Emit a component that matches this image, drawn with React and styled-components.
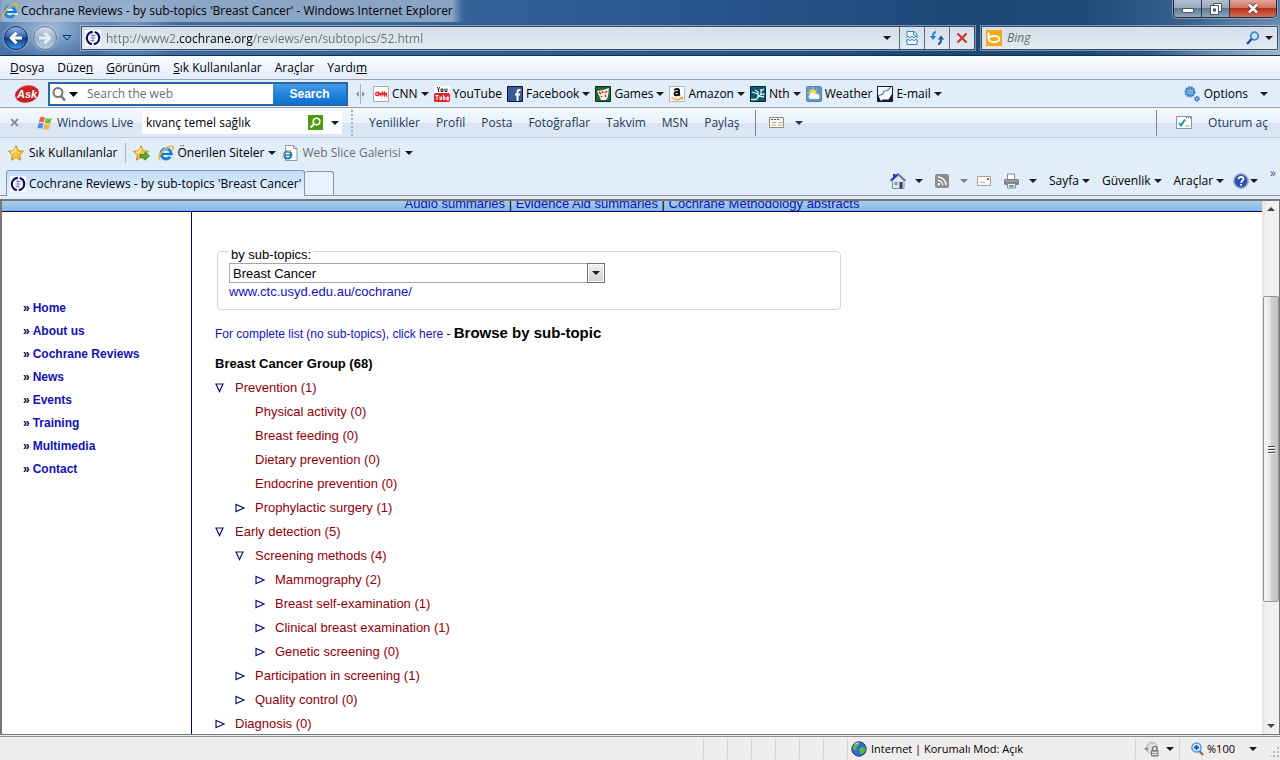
import React from 'react'
import styled, { createGlobalStyle } from 'styled-components'

const GlobalStyle = createGlobalStyle`
  * {
    box-sizing: border-box;
  }

  body {
    margin: 0;
    font-family: "Open Sans", "Noto Sans", sans-serif;
    font-size: 12px;
    line-height: 16px;
    color: #000;
  }

  button {
    padding: 0;
    border: 0;
    background: none;
    color: inherit;
    font: inherit;
  }

  svg {
    display: block;
    flex: none;
  }
`

const Window = styled.div`
  display: flex;
  flex-direction: column;
  height: 100vh;
  overflow: hidden;
  background: #e1edf9;
`

const Caret = styled.span`
  flex: none;
  width: 8px;
  height: 4px;
  border: 4px solid transparent;
  border-top-color: ${props => props.color || '#1a1a1a'};
  border-bottom: 0;
`

const Spacer = styled.div`
  flex: 1;
`

/* title bar and address row */

const Chrome = styled.header`
  border-bottom: 1px solid #16314f;
  background:
    radial-gradient(ellipse 60px 34px at 50px 28px, rgba(200, 218, 240, 0.7), transparent),
    radial-gradient(ellipse 50px 40px at 130px 30px, rgba(170, 198, 232, 0.5), transparent),
    radial-gradient(ellipse 130px 50px at 100% 60px, rgba(200, 214, 230, 0.7), transparent),
    linear-gradient(90deg, #4471a6 0, #35649b 30%, #2b5990 50%, #1d4776 75%, #1f4a7a 85%, #56799f 100%);
`

const TitleBar = styled.div`
  display: flex;
  justify-content: space-between;
  height: 22px;
  padding: 0 2px;
`

const Title = styled.h1`
  display: flex;
  align-items: center;
  gap: 3px;
  height: 22px;
  margin: 0;
  background: rgba(190, 204, 220, 0.62);
  box-shadow: 0 0 8px 5px rgba(190, 204, 220, 0.62);
  clip-path: inset(0 -14px 0 -2px);
  font-size: 12px;
  font-weight: 400;
`

const WindowButtons = styled.div`
  display: flex;
  height: 18px;
  margin-right: 1px;
  border: 1px solid #1d2b3d;
  border-top: 0;
  border-radius: 0 0 5px 5px;
  box-shadow: 0 0 0 1px rgba(200, 216, 234, 0.5);
  overflow: hidden;
`

const WindowButton = styled.button`
  display: flex;
  align-items: center;
  justify-content: center;
  width: ${props => (props.$close ? 46 : 28)}px;
  border-right: ${props => (props.$close ? 0 : 1)}px solid #26374b;
  background: ${props =>
    props.$close
      ? 'linear-gradient(#e0a598 0, #cf7563 45%, #b92f17 50%, #d0705a 100%)'
      : 'linear-gradient(#b3c0cf 0, #97a8bc 45%, #62788f 50%, #93a5b9 100%)'};
`

const AddressRow = styled.div`
  display: flex;
  align-items: center;
  height: 33px;
  padding: 0 2px 1px 4px;
`

const RoundButton = styled.button`
  display: flex;
  align-items: center;
  justify-content: center;
  width: 24px;
  height: 24px;
  margin-right: 5px;
  border: 1px solid ${props => (props.$off ? '#60799a' : '#0d2a58')};
  border-radius: 50%;
  box-shadow: 0 0 2px #dbe8f6;
  background: ${props =>
    props.$off
      ? 'linear-gradient(#d3deea, #9fb2ca 50%, #bccbdd)'
      : 'linear-gradient(#8fb0dc 0, #3464ad 45%, #0c3580 50%, #3d9be6 100%)'};
`

const HistoryButton = styled.button`
  display: flex;
  align-items: center;
  height: 20px;
  margin: 0 9px 0 0;
`

const Field = styled.div`
  display: flex;
  align-items: center;
  height: 24px;
  border: 1px solid #3b5169;
  outline: 1px solid rgba(200, 216, 234, 0.5);
  background: linear-gradient(#d6dfe9, #e2eaf4);
`

const AddressField = styled(Field)`
  flex: 1;
  margin-right: 6px;
  padding-left: 3px;
`

const BingField = styled(Field)`
  width: 297px;
  padding: 0 4px 0 4px;
`

const AddressInput = styled.input`
  flex: 1;
  min-width: 0;
  height: 20px;
  margin-left: 2px;
  padding: 0 3px;
  border: 0;
  outline: 0;
  background: linear-gradient(90deg, #6c7075 73px, #000 73px, #000 150px, #6c7075 150px);
  background-clip: text;
  -webkit-text-fill-color: transparent;
  font: inherit;
`

const BingInput = styled.input`
  flex: 1;
  min-width: 0;
  padding: 0 5px;
  border: 0;
  outline: 0;
  background: none;
  font: inherit;

  &::placeholder {
    color: #666a70;
    font-style: italic;
    opacity: 1;
  }
`

const FieldButton = styled.button`
  display: flex;
  align-items: center;
  justify-content: center;
  width: 25px;
  height: 22px;
  border-left: ${props => (props.$plain ? 0 : 1)}px solid #5a6b80;
`

/* toolbars */

const MenuBar = styled.nav`
  display: flex;
  align-items: center;
  gap: 13px;
  height: 24px;
  padding-left: 10px;
  border-bottom: 1px solid #a0a0a0;
  background: linear-gradient(#fafcff 0, #eff4fe 50%, #e3ebf9 100%);
`

const AskBar = styled.div`
  display: flex;
  align-items: center;
  height: 28px;
  padding-left: 14px;
  border-bottom: 1px solid #a0a0a0;
  background: #e1edf9;
`

const AskSearch = styled.form`
  display: flex;
  align-items: center;
  height: 24px;
  width: 300px;
  margin: 0 8px 0 8px;
  border: 2px solid #2668ab;
  background: #fff;
`

const AskInput = styled.input`
  flex: 1;
  min-width: 0;
  padding: 0 0 0 9px;
  border: 0;
  outline: 0;
  background: none;
  font: inherit;

  &::placeholder {
    color: #6e6e6e;
    opacity: 1;
  }
`

const AskButton = styled.button`
  align-self: stretch;
  width: 73px;
  background: linear-gradient(#4a9ae6 0, #2383dc 50%, #0f70cf 100%);
  color: #fff;
  font-family: "Liberation Sans", Arial, sans-serif;
  font-weight: 700;
  font-size: 12px;
`

const AskItem = styled.button`
  display: flex;
  align-items: center;
  gap: 3px;
  margin-left: ${props => (props.$first ? 8 : 5)}px;
`

const OptionsButton = styled.button`
  display: flex;
  align-items: center;
  gap: 4px;
  margin-right: 12px;

  ${Caret} {
    margin-left: 8px;
  }
`

const LiveBar = styled.div`
  display: flex;
  align-items: center;
  height: 30px;
  padding-left: 10px;
  border-bottom: 1px solid #c4cedb;
  background: linear-gradient(#f3f8fe 0, #eaf2fc 50%, #dae5f3 52%, #dde8f6 100%);
  color: #1e395b;
`

const LiveBrand = styled.span`
  display: flex;
  align-items: center;
  gap: 4px;
  width: 105px;
  margin-left: 18px;
`

const LiveSearch = styled.form`
  display: flex;
  align-items: center;
  width: 200px;
  height: 23px;
  padding: 0 3px 0 4px;
  background: #fff;
`

const LiveInput = styled.input`
  flex: 1;
  min-width: 0;
  padding: 0;
  border: 0;
  outline: 0;
  color: #000;
  font: inherit;
`

const LiveGo = styled.button`
  margin-right: 8px;
`

const DottedLine = styled.div`
  width: 2px;
  height: 26px;
  margin: 0 16px 0 9px;
  background: repeating-linear-gradient(#a5aebb 0 2px, transparent 2px 4px);
`

const LiveLinks = styled.nav`
  display: flex;
  gap: 16px;
`

const BarLink = styled.a`
  color: inherit;
  text-decoration: none;
  white-space: nowrap;
`

const Divider = styled.div`
  flex: none;
  width: 1px;
  height: ${props => props.$h || 26}px;
  margin: ${props => props.$m || '0'};
  background: ${props => props.color || '#7c8796'};
`

const FavoritesBar = styled.div`
  display: flex;
  align-items: center;
  height: 30px;
  padding-left: 8px;
`

const FavoriteButton = styled.button`
  display: flex;
  align-items: center;
  gap: 4px;
  margin-right: ${props => props.$after || 8}px;
  color: ${props => (props.$muted ? '#6d6d6d' : '#000')};
`

const TabRow = styled.div`
  display: flex;
  align-items: flex-end;
  height: 28px;
  padding-left: 6px;
  border-bottom: 1px solid #8c95a5;
`

const Tab = styled.button`
  display: flex;
  align-items: center;
  gap: 3px;
  width: 299px;
  height: 26px;
  margin-bottom: -1px;
  padding-left: 3px;
  border: 1px solid #8c95a5;
  border-bottom: 0;
  border-radius: 3px 3px 0 0;
  background: linear-gradient(#bfdcfa, #eaf3fd);
  white-space: nowrap;
`

const NewTab = styled.button`
  width: 29px;
  height: 24px;
  border: 1px solid #8c95a5;
  border-left: 0;
  border-bottom: 0;
  border-radius: 3px 3px 0 0;
  background: #e9f1fb;
`

const Commands = styled.div`
  display: flex;
  align-items: center;
  height: 28px;
  margin-left: auto;
  padding-right: 4px;
`

const Command = styled.button`
  display: flex;
  align-items: center;
  gap: ${props => props.$gap || 3}px;
  margin-right: ${props => props.$after || 12}px;
`

const More = styled.button`
  align-self: flex-start;
  color: #4b5b9c;
  line-height: 12px;
`

/* page area */

const Viewport = styled.div`
  display: flex;
  flex: 1;
  min-height: 0;
  margin-top: 3px;
  border: solid #787878;
  border-width: 2px 1px 1px 2px;
  background: #fff;
  font-family: "Liberation Sans", Arial, sans-serif;
  font-size: 13px;
`

const Page = styled.div`
  display: flex;
  flex: 1;
  flex-direction: column;
  min-width: 0;
  overflow: hidden;
`

const PageStrip = styled.div`
  display: flex;
  flex: none;
  align-items: flex-end;
  justify-content: center;
  height: 11px;
  border-bottom: 1px solid #00007c;
  background: linear-gradient(#a5cdec, #86b8e0);
  line-height: 14px;
  overflow: hidden;
  white-space: pre;
`

const PageLink = styled.a`
  color: #1111b5;
  text-decoration: none;
`

const Columns = styled.div`
  display: flex;
  flex: 1;
  min-height: 0;
`

const Sidebar = styled.nav`
  width: 190px;
  padding: 85px 0 0 21px;
  border-right: 1px solid #00006c;
  color: #000050;
  font-size: 12px;
  font-weight: 700;
  line-height: 23px;
`

const SideItem = styled.div`
  ${PageLink} {
    margin-left: 3px;
  }
`

const Content = styled.main`
  flex: 1;
  min-width: 0;
  padding: 28px 23px 0;
`

const TopicBox = styled.fieldset`
  max-width: 624px;
  height: 70px;
  margin: 0 0 0 2px;
  padding: 0 11px;
  border: 1px solid #ccd7e0;
  border-radius: 4px;
  line-height: 17px;
`

const TopicLegend = styled.legend`
  margin: 0;
  padding: 6px 2px 0;
`

const SelectBox = styled.div`
  display: grid;
  width: 376px;
  height: 20px;
`

const TopicSelect = styled.select`
  grid-area: 1 / 1;
  padding: 1px 3px 0;
  border: 1px solid #a5a5aa;
  border-radius: 0;
  appearance: none;
  background: #fff;
  font: inherit;
`

const SelectArrow = styled.span`
  grid-area: 1 / 1;
  display: flex;
  align-items: center;
  justify-content: center;
  justify-self: end;
  width: 18px;
  border: 1px solid #707070;
  box-shadow: inset 0 0 0 1px #fff;
  background: linear-gradient(#f2f2f2, #d0d0d0);
  pointer-events: none;
`

const Lead = styled.p`
  margin: 11px 0 0;
  font-size: 12px;
  line-height: 24px;

  strong {
    font-size: 15px;
  }
`

const GroupTitle = styled.h2`
  margin: 6px 0 0;
  font-size: 13px;
  line-height: 24px;
`

const TreeList = styled.ul`
  margin: 0;
  padding-left: ${props => (props.$nested ? 20 : 0)}px;
  list-style: none;
  line-height: 24px;
`

const TreeRow = styled.div`
  display: grid;
  grid-template-columns: 20px 1fr;
  align-items: center;
`

const TreeLink = styled(PageLink)`
  color: #8f0008;
`

const ScrollTrack = styled.div`
  display: flex;
  flex-direction: column;
  width: 17px;
  border-left: 1px solid #e3e3e3;
  background: linear-gradient(90deg, #e8e8e8, #f0f0f0 30%, #f2f2f2);
`

const ScrollButton = styled.button`
  display: flex;
  align-items: center;
  justify-content: center;
  height: 17px;
  transform: ${props => (props.$up ? 'rotate(180deg)' : 'none')};
`

const ScrollSpace = styled.div`
  flex: ${props => props.$part};
`

const ScrollThumb = styled.div`
  display: flex;
  flex: 306;
  flex-direction: column;
  align-items: center;
  justify-content: center;
  gap: 2px;
  border: 1px solid #959595;
  border-radius: 2px;
  background: linear-gradient(90deg, #f5f5f5, #e6e6e8 45%, #cfcfd2 50%, #c4c4c8);
`

const Grip = styled.span`
  width: 7px;
  height: 1px;
  background: #444;
  box-shadow: 0 1px #fff;
`

const StatusBar = styled.footer`
  display: flex;
  align-items: center;
  flex: none;
  height: 24px;
  margin-top: 1px;
  border-top: 1px solid #8e8e8e;
  background: #f0eded;
  font-size: 11px;
`

const StatusCell = styled.div`
  display: flex;
  align-items: center;
  gap: ${props => props.$gap || 4}px;
  width: ${props => props.$w}px;
  height: 20px;
  padding-left: ${props => props.$pad || 0}px;
  padding-right: ${props => props.$end || 0}px;
  border-left: 1px solid #d5d2d2;
`

/* icons */

const IeIcon = () => (
  <svg width="16" height="16" viewBox="0 0 16 16">
    <circle cx="8" cy="8.800" r="5" fill="#e9f4fd" stroke="#1f86d6" strokeWidth="3.200" />
    <path d="M4 9h10.500" stroke="#1b74c4" strokeWidth="2.200" />
    <path d="M10.500 10.200h5.500v1.900h-4z" fill="#e1edf9" />
    <path d="M1.500 14.500C-.5 11 6.500 2 13.500 1c2.500-.2 2 2.500 1 4" fill="none" stroke="#f0b429" strokeWidth="1.600" />
    <path d="M4.500 6a4.800 4.800 0 0 1 6-1.800" fill="none" stroke="#8fd0fa" strokeWidth="1" />
  </svg>
)

const CochraneIcon = () => (
  <svg width="16" height="16" viewBox="0 0 16 16">
    <path d="M0 0h16v16H0z" fill="#fff" />
    <circle cx="8" cy="8" r="6.200" fill="none" stroke="#0a0a6e" strokeWidth="2.200" strokeDasharray="17.500 2" strokeDashoffset="-10.700" />
    <path d="M8 4v8M6 5.500h4.500M5.500 8h5M5.500 10.500h4" stroke="#8080b8" strokeWidth="1" />
  </svg>
)

const Arrow = ({ back }) => (
  <svg width="16" height="16" viewBox="0 0 16 16">
    <path
      d={back ? 'M14 8H4M8.500 2.800 3.300 8l5.200 5.200' : 'M2 8h10M7.500 2.800 12.700 8l-5.200 5.200'}
      fill="none" stroke={back ? '#fff' : '#e6edf5'} strokeWidth="3"
    />
  </svg>
)

const TearIcon = () => (
  <svg width="14" height="16" viewBox="0 0 14 16">
    <path d="M2 6V1.500h7L12 4v3M2 10v4.500h10V10" fill="#f4faff" stroke="#2f8fc4" />
    <path d="m1 8 2-2 2 2 2-2 2 2 2-2 2 2M1 11l2-2 2 2 2-2 2 2 2-2 2 2" fill="none" stroke="#3b8fbd" />
    <path d="M8.500 2v3H12" fill="none" stroke="#2f8fc4" />
  </svg>
)

const RefreshIcon = () => (
  <svg width="16" height="16" viewBox="0 0 16 16">
    <path d="M7 2C4.500 2 4 3.500 4 7" fill="none" stroke="#2b83d0" strokeWidth="2" />
    <path d="M.8 6h6.400L4 10z" fill="#2b83d0" />
    <path d="M9 14c2.500 0 3-1.500 3-5" fill="none" stroke="#1c56a6" strokeWidth="2" />
    <path d="M8.800 9.500h6.400L12 5.500z" fill="#1c56a6" />
  </svg>
)

const Cross = ({ size = 12, color = '#d13a32', width = 2.4 }) => (
  <svg width={size} height={size} viewBox="0 0 12 12">
    <path d="m1.500 1.500 9 9m0-9-9 9" stroke={color} strokeWidth={width} />
  </svg>
)

const Magnifier = () => (
  <svg width="14" height="14" viewBox="0 0 14 14">
    <circle cx="8.500" cy="5" r="3.800" fill="#cfe4f8" stroke="#3f8ad0" strokeWidth="1.800" />
    <path d="M5.800 7.800 1 13" stroke="#27479a" strokeWidth="2.400" />
  </svg>
)

const BingIcon = () => (
  <svg width="16" height="16" viewBox="0 0 16 16">
    <path d="M0 0h16v16H0z" fill="#fba919" />
    <path d="M2.500 2.500v6" stroke="#fff" strokeWidth="2" />
    <ellipse cx="8" cy="9" rx="5.300" ry="3" fill="none" stroke="#fff" strokeWidth="2" />
  </svg>
)

const AskIcon = () => (
  <svg width="26" height="20" viewBox="0 0 26 20">
    <ellipse cx="13" cy="10" rx="12" ry="8.500" fill="#c91f23" transform="rotate(-12 13 10)" />
    <path d="M3 7c4-6 14-7 19-3" fill="none" stroke="#e9696a" />
    <text x="3" y="14" fill="#fff" fontFamily="Liberation Sans" fontSize="11" fontWeight="700" fontStyle="italic">Ask</text>
  </svg>
)

const LiveFlag = () => (
  <svg width="16" height="16" viewBox="0 0 16 16">
    <path d="M3 2.500q2.500-1.500 5 0L6.800 7.500q-2.500-1.200-5 .2z" fill="#ea6a35" />
    <path d="M9 3q2.800 1.500 5.800 0l-1.400 5q-2.800 1.200-5.600-.2z" fill="#7ab83c" />
    <path d="M1.500 8.800q2.600-1.400 5-.2l-1.300 5q-2.400-1.300-5 0z" fill="#4f8fdc" />
    <path d="M7.600 9q2.800 1.400 5.600.2l-1.400 4.800q-2.800 1.400-5.600-.2z" fill="#f5b82e" />
  </svg>
)

const StarIcon = ({ add }) => (
  <svg width="17" height="16" viewBox="0 0 17 16">
    <path
      d="m8 .8 2.200 4.900 5.300.6-4 3.600 1.200 5.300L8 12.500l-4.700 2.700 1.200-5.300-4-3.600 5.300-.6z"
      fill="#fdc93b" stroke="#c98a1b"
    />
    <path d="M8 3 6.500 6.600 3 7.200" fill="none" stroke="#fff3b8" strokeWidth="1.400" />
    {add && <path d="M7 9.500h5V7l4.500 4-4.500 4v-2.500H7z" fill="#48b83c" stroke="#1d7a1f" strokeWidth=".8" />}
  </svg>
)

const WebSliceIcon = () => (
  <svg width="16" height="16" viewBox="0 0 16 16">
    <path d="M3.500.5h8l3.500 3V15.500H3.500z" fill="#fff" stroke="#8f98a3" />
    <path d="M11.500.5v3H15" fill="none" stroke="#8f98a3" />
    <circle cx="5.800" cy="10" r="3.500" fill="none" stroke="#1f7cc8" strokeWidth="2.200" />
    <path d="M3 10h7" stroke="#1f7cc8" strokeWidth="1.500" />
    <path d="M1 14c-1-3 4-8 9-8.500" fill="none" stroke="#e8b23a" />
  </svg>
)

const HomeIcon = () => (
  <svg width="16" height="16" viewBox="0 0 16 16">
    <path d="M3 1h2.500v4H3z" fill="#283a9e" />
    <path d="M2.500 7.500 8.500 2.500l5.500 5v8H2.500z" fill="#e4e7ec" stroke="#8a94a6" />
    <path d="M.5 7.800 8 1l7.500 6.800" fill="none" stroke="#5a76b8" strokeWidth="1.800" />
    <path d="M1 7.300 7 1.800" stroke="#1c33b0" strokeWidth="1.600" />
    <path d="M4.500 9h3v3h-3z" fill="#7c93b8" />
    <path d="M9.500 9h3v6.500h-3z" fill="#2c3c66" />
  </svg>
)

const FeedIcon = () => (
  <svg width="14" height="14" viewBox="0 0 14 14">
    <rect width="14" height="14" rx="2" fill="#8d8d8d" />
    <circle cx="3.800" cy="10.300" r="1.200" fill="#fff" />
    <path d="M2.800 6.500a4.800 4.800 0 0 1 4.800 4.800M2.800 3a8.300 8.300 0 0 1 8.300 8.300" fill="none" stroke="#fff" strokeWidth="1.400" />
  </svg>
)

const MailIcon = () => (
  <svg width="14" height="11" viewBox="0 0 14 11">
    <path d="M.5.500h13v9H.5z" fill="#fbf8f4" stroke="#aaa39b" />
    <path d="M10 2h2v2h-2z" fill="#d3432f" />
    <path d="M3 6.500h5" stroke="#b7bcc8" />
  </svg>
)

const PrinterIcon = () => (
  <svg width="17" height="16" viewBox="0 0 17 16">
    <path d="M4.500 1h7v6h-7z" fill="#fff" stroke="#8a8a8a" />
    <rect x="1" y="6" width="15" height="6" rx="1.500" fill="#7c7f84" />
    <path d="M2 8h13" stroke="#b6b9bd" />
    <path d="M4.500 10.500h8v4.500h-8z" fill="#eaf6fa" stroke="#8a8a8a" />
    <path d="M6 13h5" stroke="#2a9cb3" strokeWidth="1.600" />
  </svg>
)

const HelpIcon = () => (
  <svg width="16" height="16" viewBox="0 0 16 16">
    <circle cx="8" cy="8" r="7.200" fill="#2b51b0" stroke="#a6aebd" strokeWidth="1.500" />
    <path d="M5.500 6.200c0-3.200 5-3 5-.2 0 1.800-2.300 1.700-2.400 3.700M8.100 11v1.800" fill="none" stroke="#fff" strokeWidth="1.700" />
  </svg>
)

const GearsIcon = () => (
  <svg width="16" height="16" viewBox="0 0 16 16">
    <circle cx="6" cy="5.800" r="4.400" fill="#5c9ed6" stroke="#3d80c0" strokeWidth="2.200" strokeDasharray="2 .6" />
    <path d="M3 4.500h6M3 7h6" stroke="#8cc0ea" />
    <circle cx="13" cy="12.800" r="2" fill="#86b9e2" stroke="#2e74b5" strokeWidth="1.600" strokeDasharray="1.400 .5" />
  </svg>
)

const CardIcon = () => (
  <svg width="16" height="12" viewBox="0 0 16 12">
    <path d="M.5.500h14v10H.5z" fill="#f8f6ea" stroke="#8f8d83" />
    <path d="M2 2.500h8" stroke="#555" strokeDasharray="2 1" />
    <path d="M3 5.500h4M3 8h4M9 5.500h4M9 8h4" stroke="#b4b1a5" />
  </svg>
)

const SignInIcon = () => (
  <svg width="16" height="13" viewBox="0 0 16 13">
    <path d="M.5.500h15v12H.5z" fill="#fff" stroke="#8a93a0" />
    <path d="M10 1.500h5" stroke="#6b7480" strokeWidth="1.500" strokeDasharray="1 1" />
    <path d="m3 7 2 2.500L9 3.500" fill="none" stroke="#1c8fc4" strokeWidth="2" />
    <path d="M9 10h5" stroke="#9aa3ae" />
  </svg>
)

const GlobeIcon = () => (
  <svg width="16" height="16" viewBox="0 0 16 16">
    <circle cx="8" cy="8" r="7.200" fill="#2b6fc4" stroke="#1b3e7c" />
    <path d="M3 3c3-2.500 6-1 5 1S5 6 5.500 8 3 9.500 1.500 7.500zM9 7c2-1.500 5-1 5.500 1s-2 5-4 5-1-2-2-3-.500-2 .500-3z" fill="#57b544" />
    <path d="M4 3.500c1-1 2-1.500 4-1.500" stroke="#d8f1ff" fill="none" />
  </svg>
)

const LockGlobeIcon = () => (
  <svg width="16" height="16" viewBox="0 0 16 16">
    <circle cx="8" cy="7" r="5.500" fill="#e2e2e2" stroke="#a3a3a3" />
    <path d="M0 7h5L2.500 10z" fill="#8d8d8d" />
    <path d="M8.500 9.500V7.500a2.200 2.200 0 0 1 4.400 0v2" fill="none" stroke="#7d7d7d" strokeWidth="1.300" />
    <path d="M7.500 9.500h6.500V15H7.500z" fill="#a0a0a0" stroke="#777" />
    <path d="M8 11.500h5.500M8 13.500h5.500" stroke="#ddd" />
  </svg>
)

const ZoomIcon = () => (
  <svg width="13" height="14" viewBox="0 0 13 14">
    <path d="m8 8.500 4 4.500" stroke="#9a6a3e" strokeWidth="2.400" />
    <circle cx="5.500" cy="5.500" r="4.600" fill="#d8ecff" stroke="#5a94d2" strokeWidth="1.500" />
    <path d="M3 5.500h5M5.500 3v5" stroke="#1456b8" strokeWidth="1.800" />
  </svg>
)

const SizeGrip = () => (
  <svg width="10" height="18" viewBox="0 0 10 18">
    <path d="M7 8h2M7 12h2M3 12h2M7 16h2M3 16h2M-1 16h2" stroke="#c0bcbc" strokeWidth="2" />
  </svg>
)

const SiteIcon = ({ name }) => (
  <svg width="16" height="16" viewBox="0 0 16 16">
    {name === 'CNN' && (
      <>
        <path d="M.5.500h15v15H.5z" fill="#fff" stroke="#aaa" />
        <path d="M5.500 6.500H3.800c-1.500 0-1.500 3 0 3H5.500V6.500l2.500 3V6.500M9.500 9.500V6.500l2 3V6.500l2 3V6.500" fill="none" stroke="#e3262b" strokeWidth="1.300" />
      </>
    )}
    {name === 'YouTube' && (
      <>
        <path d="M0 0h16v16H0z" fill="#fff" />
        <rect y="7" width="16" height="9" rx="1.500" fill="#e0262a" />
        <path d="m3 1 1.500 2L6 1M4.500 3v3M7 3h2v2.500H7zM11 2.500v3h2v-3" fill="none" stroke="#222" />
        <path d="M1.500 9.500h3M3 9.500V14M6 10.500v3h1.500v-3M9.500 9v4.500H11V11H9.500M15 14h-2v-3h1.500v1.500H13" fill="none" stroke="#fff" />
      </>
    )}
    {name === 'Facebook' && (
      <>
        <path d="M.5.500h15v15H.5z" fill="#3b5998" stroke="#10182c" />
        <path d="M13.500 4h-1.500c-1.500 0-1.500 1-1.500 2v9M8 8.500h5" fill="none" stroke="#fff" strokeWidth="2" />
      </>
    )}
    {name === 'Games' && (
      <>
        <path d="M.5.500h15v15H.5z" fill="#1a6b34" stroke="#0b2e17" />
        <path d="m2 5 6-1 6-2-1 9-2 3H6z" fill="#f6f3ee" />
        <path d="m4 6 2 2m1-3 1 2m2 0 2-2M6 10l1 1m3-2 1 2" stroke="#cf2b2b" strokeWidth="1.600" />
      </>
    )}
    {name === 'Amazon' && (
      <>
        <path d="M.5.500h15v15H.5z" fill="#fff" stroke="#b5b5b5" />
        <path d="M5.500 4.500c.5-2 4.500-2 4.500 0v4l1 1M10 5.800c-3 0-4.500.500-4.500 2 0 2 3.500 2 4.500-.3" fill="none" stroke="#111" strokeWidth="1.900" />
        <path d="M2.500 11.500c3.500 2.800 7.500 2.800 10.500.5m-1.500-.8 2 .3-.5 2" fill="none" stroke="#f59b1b" strokeWidth="1.300" />
      </>
    )}
    {name === 'Nth' && (
      <>
        <path d="M.5.500h15v15H.5z" fill="#0e5873" stroke="#06293a" />
        <path d="M1 13.500h5l4.500-5 4-.5M8 11V6L5 4M8 8 2 6m7 4 5 1M11 8V3m0 2 3-2" fill="none" stroke="#dff3f6" strokeWidth="1.300" />
      </>
    )}
    {name === 'Weather' && (
      <>
        <rect x=".5" y=".5" width="15" height="15" rx="1.500" fill="#5b9ad0" stroke="#6b7f92" />
        <circle cx="7" cy="7" r="3.500" fill="#ffd34d" />
        <path d="M7 1v3M1.500 7H4M3 3l2 2m6-2L9.500 4.500" stroke="#ffd34d" />
        <path d="M4 13a2.500 2.500 0 0 1 0-4.500 3 3 0 0 1 5.500 0 2.500 2.500 0 0 1 4 2.500c0 1.500-.5 2-1.500 2z" fill="#f7fafd" />
      </>
    )}
    {name === 'E-mail' && (
      <>
        <path d="M.5.500h15v15H.5z" fill="#f6fafe" stroke="#10182c" />
        <path d="M1 9.500c4-.5 6-1.500 6-4.500 3 0 5-1 6.500-4" fill="none" stroke="#4f86c6" strokeWidth="1.200" />
        <path d="M1 9v6h3zM15 8v7H4l1.500-1.500h6z" fill="#14223c" />
      </>
    )}
  </svg>
)

const TreeMarker = ({ open }) => (
  <svg width="10" height="10" viewBox="0 0 10 10">
    <path d={open ? 'M1 1h7L4.500 8.500z' : 'M1 1.500v7L9 5z'} fill="none" stroke="#14147c" strokeWidth="1.200" />
  </svg>
)

const menus = [
  ['', 'D', 'osya'],
  ['Düze', 'n', ''],
  ['', 'G', 'örünüm'],
  ['', 'S', 'ık Kullanılanlar'],
  ['Ara', 'ç', 'lar'],
  ['Yardı', 'm', ''],
]

const sites = [
  { name: 'CNN', menu: true },
  { name: 'YouTube' },
  { name: 'Facebook', menu: true },
  { name: 'Games', menu: true },
  { name: 'Amazon', menu: true },
  { name: 'Nth', menu: true },
  { name: 'Weather' },
  { name: 'E-mail', menu: true },
]

const liveLinks = ['Yenilikler', 'Profil', 'Posta', 'Fotoğraflar', 'Takvim', 'MSN', 'Paylaş']

const sideLinks = ['Home', 'About us', 'Cochrane Reviews', 'News', 'Events', 'Training', 'Multimedia', 'Contact']

const topics = [
  {
    label: 'Prevention (1)',
    open: true,
    children: [
      { label: 'Physical activity (0)', leaf: true },
      { label: 'Breast feeding (0)', leaf: true },
      { label: 'Dietary prevention (0)', leaf: true },
      { label: 'Endocrine prevention (0)', leaf: true },
      { label: 'Prophylactic surgery (1)' },
    ],
  },
  {
    label: 'Early detection (5)',
    open: true,
    children: [
      {
        label: 'Screening methods (4)',
        open: true,
        children: [
          { label: 'Mammography (2)' },
          { label: 'Breast self-examination (1)' },
          { label: 'Clinical breast examination (1)' },
          { label: 'Genetic screening (0)' },
        ],
      },
      { label: 'Participation in screening (1)' },
      { label: 'Quality control (0)' },
    ],
  },
  { label: 'Diagnosis (0)' },
]

const Tree = ({ items, nested }) => (
  <TreeList $nested={nested}>
    {items.map(item => (
      <li key={item.label}>
        <TreeRow>
          {item.leaf ? <span /> : <TreeMarker open={item.open} />}
          <div><TreeLink href="#">{item.label}</TreeLink></div>
        </TreeRow>
        {item.children && <Tree items={item.children} nested />}
      </li>
    ))}
  </TreeList>
)

const App = () => {
  return (
    <Window>
      <GlobalStyle />
      <Chrome>
        <TitleBar>
          <Title><IeIcon />Cochrane Reviews - by sub-topics 'Breast Cancer' - Windows Internet Explorer</Title>
          <WindowButtons>
            <WindowButton aria-label="Minimize">
              <svg width="12" height="11" viewBox="0 0 12 11"><path d="M.5 5.500h11v4H.5z" fill="#fff" stroke="#46566b" /></svg>
            </WindowButton>
            <WindowButton aria-label="Restore">
              <svg width="12" height="12" viewBox="0 0 12 12">
                <path d="M3.500.500h8v8h-8z" fill="#fff" stroke="#46566b" />
                <path d="M.5 2.500h8v9h-8z" fill="#fff" stroke="#46566b" />
                <path d="M3 5.500h3v3H3z" fill="#46566b" />
              </svg>
            </WindowButton>
            <WindowButton $close aria-label="Close">
              <svg width="12" height="11" viewBox="0 0 12 11">
                <path d="m2 1.500 8 8m0-8-8 8" stroke="#5a3b3b" strokeWidth="4.500" />
                <path d="m2 1.500 8 8m0-8-8 8" stroke="#fff" strokeWidth="2.600" />
              </svg>
            </WindowButton>
          </WindowButtons>
        </TitleBar>
        <AddressRow>
          <RoundButton aria-label="Back"><Arrow back /></RoundButton>
          <RoundButton $off aria-label="Forward"><Arrow /></RoundButton>
          <HistoryButton aria-label="Recent pages">
            <svg width="10" height="6" viewBox="0 0 10 6"><path d="M1 .500h8L5 5z" fill="#5cb6ec" stroke="#12345e" /></svg>
          </HistoryButton>
          <AddressField>
            <CochraneIcon />
            <AddressInput aria-label="Address" defaultValue="http://www2.cochrane.org/reviews/en/subtopics/52.html" />
            <FieldButton $plain aria-label="Address list"><Caret /></FieldButton>
            <FieldButton aria-label="Compatibility view"><TearIcon /></FieldButton>
            <FieldButton aria-label="Refresh"><RefreshIcon /></FieldButton>
            <FieldButton aria-label="Stop"><Cross /></FieldButton>
          </AddressField>
          <BingField>
            <BingIcon />
            <BingInput aria-label="Bing" placeholder="Bing" />
            <FieldButton $plain aria-label="Search"><Magnifier /></FieldButton>
            <Caret />
          </BingField>
        </AddressRow>
      </Chrome>

      <MenuBar>
        {menus.map(([before, key, after]) => (
          <button key={before + key}>{before}<u>{key}</u>{after}</button>
        ))}
      </MenuBar>

      <AskBar>
        <AskIcon />
        <AskSearch onSubmit={e => e.preventDefault()}>
          <svg width="28" height="16" viewBox="0 0 28 16">
            <circle cx="8" cy="6.500" r="4.500" fill="none" stroke="#777" strokeWidth="2" />
            <path d="m11 10 4 4.500" stroke="#777" strokeWidth="2.600" />
            <path d="M19 6h9l-4.500 5z" />
          </svg>
          <AskInput aria-label="Search the web" placeholder="Search the web" />
          <AskButton>Search</AskButton>
        </AskSearch>
        <svg width="9" height="20" viewBox="0 0 9 20">
          <path d="M4.500 0v20" stroke="#a9b0b8" />
          <path d="M3 7v6L0 10zM6 7v6l3-3z" fill="#8f979f" />
        </svg>
        {sites.map((site, i) => (
          <AskItem key={site.name} $first={i === 0}>
            <SiteIcon name={site.name} />
            {site.name}
            {site.menu && <Caret />}
          </AskItem>
        ))}
        <Spacer />
        <OptionsButton><GearsIcon />Options<Caret /></OptionsButton>
      </AskBar>

      <LiveBar>
        <button aria-label="Close toolbar"><Cross size={9} color="#858b93" width={2.6} /></button>
        <LiveBrand><LiveFlag />Windows Live</LiveBrand>
        <LiveSearch onSubmit={e => e.preventDefault()}>
          <LiveInput aria-label="Windows Live" defaultValue="kıvanç temel sağlık" />
          <LiveGo aria-label="Search">
            <svg width="15" height="15" viewBox="0 0 15 15">
              <path d="M0 0h15v15H0z" fill="#4c9a0b" />
              <circle cx="8.500" cy="6.500" r="3.300" fill="none" stroke="#fff" strokeWidth="1.600" />
              <path d="m6 9-3.500 3.500" stroke="#fff" strokeWidth="2" />
            </svg>
          </LiveGo>
          <Caret />
        </LiveSearch>
        <DottedLine />
        <LiveLinks>
          {liveLinks.map(link => <BarLink key={link} href="#">{link}</BarLink>)}
        </LiveLinks>
        <Divider $m="0 13px 0 15px" />
        <Command $gap={10} aria-label="Cards"><CardIcon /><Caret color="#1e395b" /></Command>
        <Spacer />
        <Divider $m="0 19px 0 0" />
        <Command $gap={16}><SignInIcon />Oturum aç</Command>
      </LiveBar>

      <FavoritesBar>
        <FavoriteButton $after={7}><StarIcon />Sık Kullanılanlar</FavoriteButton>
        <Divider $h={20} $m="0 7px 0 0" color="#a7b0bc" />
        <FavoriteButton aria-label="Add to favorites"><StarIcon add /></FavoriteButton>
        <FavoriteButton $after={6}><IeIcon />Önerilen Siteler<Caret /></FavoriteButton>
        <FavoriteButton $muted><WebSliceIcon />Web Slice Galerisi<Caret /></FavoriteButton>
      </FavoritesBar>

      <TabRow>
        <Tab><CochraneIcon />Cochrane Reviews - by sub-topics 'Breast Cancer'</Tab>
        <NewTab aria-label="New tab" />
        <Commands>
          <Command $gap={9} aria-label="Home"><HomeIcon /><Caret /></Command>
          <Command $gap={11} $after={9} aria-label="Feeds"><FeedIcon /><Caret color="#7a7f86" /></Command>
          <Command aria-label="Read mail"><MailIcon /></Command>
          <Command $gap={9} aria-label="Print"><PrinterIcon /><Caret /></Command>
          <Command>Sayfa<Caret /></Command>
          <Command>Güvenlik<Caret /></Command>
          <Command $after={9}>Araçlar<Caret /></Command>
          <Command $gap={1} aria-label="Help"><HelpIcon /><Caret /></Command>
          <More aria-label="More commands">»</More>
        </Commands>
      </TabRow>

      <Viewport>
        <Page>
          <PageStrip>
            <PageLink href="#">Audio summaries</PageLink> | <PageLink href="#">Evidence Aid summaries</PageLink> | <PageLink href="#">Cochrane Methodology abstracts</PageLink>
          </PageStrip>
          <Columns>
            <Sidebar>
              {sideLinks.map(link => (
                <SideItem key={link}>»<PageLink href="#">{link}</PageLink></SideItem>
              ))}
            </Sidebar>
            <Content>
              <TopicBox>
                <TopicLegend><label htmlFor="topic">by sub-topics:</label></TopicLegend>
                <SelectBox>
                  <TopicSelect id="topic"><option>Breast Cancer</option></TopicSelect>
                  <SelectArrow><Caret /></SelectArrow>
                </SelectBox>
                <PageLink href="#">www.ctc.usyd.edu.au/cochrane/</PageLink>
              </TopicBox>
              <Lead>
                <PageLink href="#">For complete list (no sub-topics), click here</PageLink> - <strong>Browse by sub-topic</strong>
              </Lead>
              <GroupTitle>Breast Cancer Group (68)</GroupTitle>
              <Tree items={topics} />
            </Content>
          </Columns>
        </Page>
        <ScrollTrack>
          <ScrollButton $up aria-label="Scroll up"><Caret color="#444" /></ScrollButton>
          <ScrollSpace $part={78} />
          <ScrollThumb><Grip /><Grip /><Grip /></ScrollThumb>
          <ScrollSpace $part={115} />
          <ScrollButton aria-label="Scroll down"><Caret color="#444" /></ScrollButton>
        </ScrollTrack>
      </Viewport>

      <StatusBar>
        <Spacer />
        {[1, 2, 3, 4, 5, 6].map(n => <StatusCell key={n} $w={24} />)}
        <StatusCell $w={288} $pad={3}><GlobeIcon />Internet | Korumalı Mod: Açık</StatusCell>
        <StatusCell $w={44} $pad={8} $gap={6}><LockGlobeIcon /><Caret /></StatusCell>
        <StatusCell $w={91} $pad={11} $end={13} $gap={3}><ZoomIcon />%100<Spacer /><Caret /></StatusCell>
        <SizeGrip />
      </StatusBar>
    </Window>
  )
}

export default App
